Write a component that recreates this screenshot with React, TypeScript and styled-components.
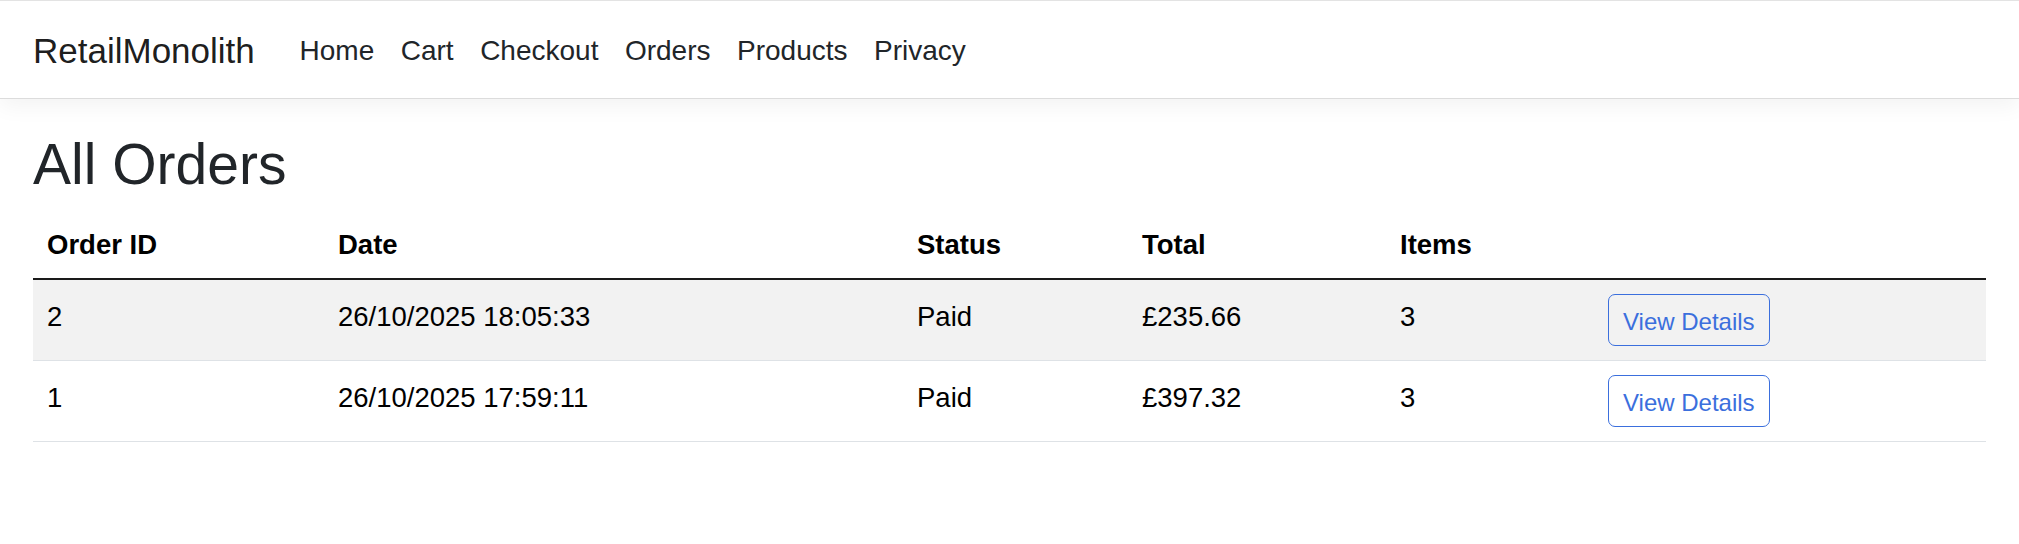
import React from "react";
import styled, { createGlobalStyle } from "styled-components";

const Global = createGlobalStyle`
  html, body { margin: 0; padding: 0; background: #fff; }
  body { font-family: "Liberation Sans", Arial, sans-serif; color: #212529; }
  * { box-sizing: border-box; }
`;

const NavBar = styled.nav`
  background: #fff;
  border-top: 1px solid #e3e3e3;
  border-bottom: 1px solid #dcdcdc;
  box-shadow: 0 7px 21px rgba(0, 0, 0, 0.05);
`;

const NavInner = styled.div`
  display: flex;
  align-items: center;
  padding: 15px 33px 12px;
`;

const Brand = styled.a`
  font-size: 35px;
  line-height: 52.5px;
  padding: 5.5px 0;
  margin-right: 31.5px;
  color: rgba(0, 0, 0, 0.9);
  text-decoration: none;
  white-space: nowrap;
`;

const NavList = styled.ul`
  display: flex;
  list-style: none;
  margin: 0;
  padding: 0;
`;

const NavLink = styled.a`
  display: block;
  font-size: 28px;
  line-height: 42px;
  padding: 14px 13.25px;
  color: #212529;
  text-decoration: none;
  white-space: nowrap;
`;

const Main = styled.main`
  padding: 31px 33px 0;
`;

const Title = styled.h1`
  margin: 0 0 10px;
  font-size: 57px;
  font-weight: 400;
  line-height: 1.2;
  color: #212529;
`;

const Table = styled.table`
  width: 100%;
  table-layout: fixed;
  border-collapse: separate;
  border-spacing: 0;
  font-size: 27.5px;
  line-height: 41.25px;
  color: #000;
`;

const Col = styled.col<{ $w?: number }>`
  width: ${(p) => (p.$w ? `${p.$w}px` : "auto")};
`;

const Th = styled.th`
  text-align: left;
  font-weight: 700;
  vertical-align: top;
  padding: 16px 14px 12px;
  border-bottom: 2px solid #1a1a1a;
  white-space: nowrap;
`;

const Td = styled.td<{ $striped: boolean; $action?: boolean }>`
  vertical-align: top;
  padding: ${(p) => (p.$action ? "14px 14px" : "16px 14px 12px")};
  border-bottom: 1px solid #dee2e6;
  background: ${(p) => (p.$striped ? "#f2f2f2" : "#fff")};
  white-space: nowrap;
`;

const DetailsButton = styled.button`
  display: inline-block;
  font-family: inherit;
  font-size: 24px;
  line-height: 36px;
  padding: 9px 14px 5px;
  color: #3b6fdd;
  background: transparent;
  border: 1px solid #3b6fdd;
  border-radius: 7px;
  cursor: pointer;
  white-space: nowrap;
`;

const links = ["Home", "Cart", "Checkout", "Orders", "Products", "Privacy"];

const orders = [
  { id: "2", date: "26/10/2025 18:05:33", status: "Paid", total: "£235.66", items: "3" },
  { id: "1", date: "26/10/2025 17:59:11", status: "Paid", total: "£397.32", items: "3" },
];

export default function App() {
  return (
    <>
      <Global />
      <NavBar>
        <NavInner>
          <Brand href="#">RetailMonolith</Brand>
          <NavList>
            {links.map((l) => (
              <li key={l}>
                <NavLink href="#">{l}</NavLink>
              </li>
            ))}
          </NavList>
        </NavInner>
      </NavBar>
      <Main>
        <Title>All Orders</Title>
        <Table>
          <colgroup>
            <Col $w={291} />
            <Col $w={579} />
            <Col $w={225} />
            <Col $w={258} />
            <Col $w={208} />
            <Col />
          </colgroup>
          <thead>
            <tr>
              <Th>Order ID</Th>
              <Th>Date</Th>
              <Th>Status</Th>
              <Th>Total</Th>
              <Th>Items</Th>
              <Th></Th>
            </tr>
          </thead>
          <tbody>
            {orders.map((o, i) => {
              const s = i % 2 === 0;
              return (
                <tr key={o.id}>
                  <Td $striped={s}>{o.id}</Td>
                  <Td $striped={s}>{o.date}</Td>
                  <Td $striped={s}>{o.status}</Td>
                  <Td $striped={s}>{o.total}</Td>
                  <Td $striped={s}>{o.items}</Td>
                  <Td $striped={s} $action>
                    <DetailsButton type="button">View Details</DetailsButton>
                  </Td>
                </tr>
              );
            })}
          </tbody>
        </Table>
      </Main>
    </>
  );
}
